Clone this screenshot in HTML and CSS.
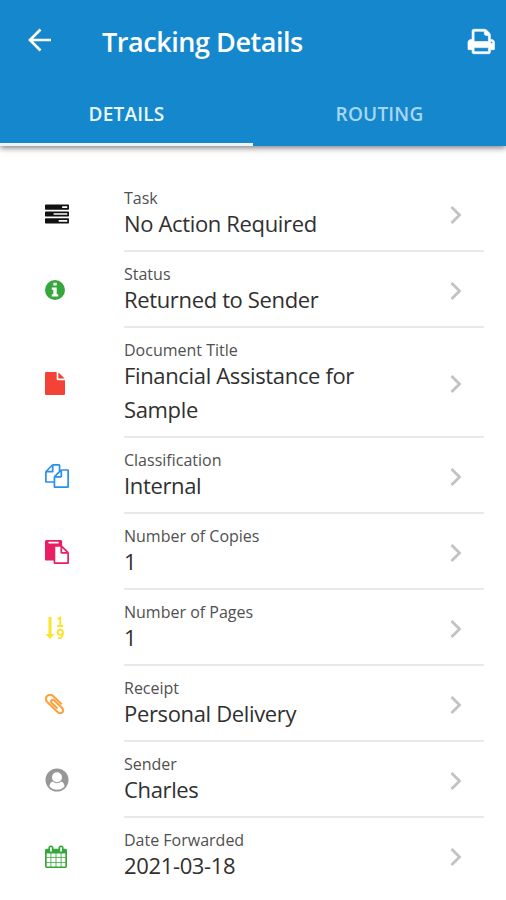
FILE: index.html
```html
<!DOCTYPE html>
<html lang="en">
<head>
<meta charset="utf-8">
<title>Tracking Details</title>
<link rel="stylesheet" href="styles.css">
</head>
<body>
<header class="header">
  <div class="toolbar">
    <svg class="back" viewBox="0 0 24 24"><path d="M23 12H2M12.500 1.500L2 12l10.500 10.500" fill="none" stroke="currentColor" stroke-width="2.700"/></svg>
    <h1 class="title">Tracking Details</h1>
    <svg class="print" viewBox="64 128 1664 1536"><path fill="currentColor" stroke="currentColor" stroke-width="40" d="M448 1536h896v-256h-896v256zm0-640h896v-384h-160q-40 0-68-28t-28-68v-160h-640v640zm1152 64q0-26-19-45t-45-19-45 19-19 45 19 45 45 19 45-19 19-45zm128 0v416q0 13-9.500 22.500t-22.500 9.500h-224v160q0 40-28 68t-68 28h-960q-40 0-68-28t-28-68v-160h-224q-13 0-22.500-9.500t-9.500-22.500v-416q0-79 56.500-135.500t135.500-56.500h64v-544q0-40 28-68t68-28h672q40 0 88 20t76 48l152 152q28 28 48 76t20 88v256h64q79 0 135.500 56.500t56.500 135.500z"/></svg>
  </div>
  <nav class="tabs">
    <div class="tab tab-active"><span class="tab-a">DETAILS</span></div>
    <div class="tab"><span class="tab-b">ROUTING</span></div>
  </nav>
</header>
<main class="list">
  <section class="row">
    <div class="icon black"><svg width="24" height="20" viewBox="0 128 1792 1408"><path d="M1024 1408h640v-128h-640v128zm-384-512h1024v-128h-1024v128zm640-512h384v-128h-384v128zm512 832v256q0 26-19 45t-45 19h-1664q-26 0-45-19t-19-45v-256q0-26 19-45t45-19h1664q26 0 45 19t19 45zm0-512v256q0 26-19 45t-45 19h-1664q-26 0-45-19t-19-45v-256q0-26 19-45t45-19h1664q26 0 45 19t19 45zm0-512v256q0 26-19 45t-45 19h-1664q-26 0-45-19t-19-45v-256q0-26 19-45t45-19h1664q26 0 45 19t19 45z"/></svg></div>
    <div class="body"><div class="text"><div class="label">Task</div><div class="value">No Action Required</div></div><svg class="chevron" viewBox="0 0 12 20"><path d="M1.500 2L9.500 10l-8 8"/></svg></div>
  </section>
  <section class="row">
    <div class="icon green"><svg width="20" height="20" viewBox="0 0 20 20"><circle cx="10" cy="10" r="10"/><path fill="#fff" d="M8.300 2.700h3.400v2.800H8.300zM6.800 7.500h4.900v6.700h1.500v2.300H6.800v-2.300h1.500V9.800H6.800z"/></svg></div>
    <div class="body"><div class="text"><div class="label">Status</div><div class="value">Returned to Sender</div></div><svg class="chevron" viewBox="0 0 12 20"><path d="M1.500 2L9.500 10l-8 8"/></svg></div>
  </section>
  <section class="row">
    <div class="icon red"><svg width="20" height="23" viewBox="128 0 1536 1792" preserveAspectRatio="none"><path d="M1152 512v-472q22 14 36 28l408 408q14 14 28 36h-472zm-128 32q0 40 28 68t68 28h544v1056q0 40-28 68t-68 28h-1344q-40 0-68-28t-28-68v-1600q0-40 28-68t68-28h800v544z"/></svg></div>
    <div class="body"><div class="text"><div class="label">Document Title</div><div class="value">Financial Assistance for Sample</div></div><svg class="chevron" viewBox="0 0 12 20"><path d="M1.500 2L9.500 10l-8 8"/></svg></div>
  </section>
  <section class="row">
    <div class="icon blue"><svg width="24" height="24" viewBox="0 0 1792 1792"><path d="M1696 384q40 0 68 28t28 68v1216q0 40-28 68t-68 28h-960q-40 0-68-28t-28-68v-288h-544q-40 0-68-28t-28-68v-672q0-40 20-88t48-76l408-408q28-28 76-48t88-20h416q40 0 68 28t28 68v328q68-40 128-40h416zm-544 213l-299 299h299v-299zm-640-384l-299 299h299v-299zm196 647l316-316v-416h-384v416q0 40-28 68t-68 28h-416v640h512v-256q0-40 20-88t48-76zm956 804v-1152h-384v416q0 40-28 68t-68 28h-416v640h896z"/></svg></div>
    <div class="body"><div class="text"><div class="label">Classification</div><div class="value">Internal</div></div><svg class="chevron" viewBox="0 0 12 20"><path d="M1.500 2L9.500 10l-8 8"/></svg></div>
  </section>
  <section class="row">
    <div class="icon pink"><svg width="24" height="24" viewBox="0 0 1792 1792"><path d="M768 1664h896v-640h-416q-40 0-68-28t-28-68v-416h-384v1152zm256-1440v-64q0-13-9.500-22.500t-22.500-9.500h-704q-13 0-22.500 9.500t-9.500 22.500v64q0 13 9.500 22.500t22.500 9.500h704q13 0 22.500-9.500t9.500-22.500zm256 672h299l-299-299v299zm512 128v672q0 40-28 68t-68 28h-960q-40 0-68-28t-28-68v-160h-544q-40 0-68-28t-28-68v-1344q0-40 28-68t68-28h1088q40 0 68 28t28 68v328q21 13 36 28l408 408q28 28 48 76t20 88z"/></svg></div>
    <div class="body"><div class="text"><div class="label">Number of Copies</div><div class="value">1</div></div><svg class="chevron" viewBox="0 0 12 20"><path d="M1.500 2L9.500 10l-8 8"/></svg></div>
  </section>
  <section class="row">
    <div class="icon yellow"><svg width="20" height="24" viewBox="0 0 20 24"><path d="M3.500 1h3v17h3L5 23 .5 18h3z"/><path class="line" d="M12.500 3.300l2.700-1.600v8M12.200 10h6"/><circle class="line" cx="15.300" cy="16.300" r="2.600"/><path class="line" d="M17.900 16.300c.3 4-1.500 6.400-4.900 5.700"/></svg></div>
    <div class="body"><div class="text"><div class="label">Number of Pages</div><div class="value">1</div></div><svg class="chevron" viewBox="0 0 12 20"><path d="M1.500 2L9.500 10l-8 8"/></svg></div>
  </section>
  <section class="row">
    <div class="icon orange"><svg width="19" height="20" viewBox="196 127 1400 1533" preserveAspectRatio="none"><path stroke="currentColor" stroke-width="30" d="M1596 1385q0 117-79 196t-196 79q-135 0-235-100l-777-776q-113-115-113-271 0-159 110-270t269-111q158 0 273 113l605 606q10 10 10 22 0 16-30.500 46.500t-46.500 30.500q-13 0-23-10l-606-607q-79-77-181-77-106 0-179 75t-73 181q0 105 76 181l776 777q63 63 145 63 64 0 106-42t42-106q0-82-63-145l-581-581q-26-24-60-24-29 0-48 19t-19 48q0 32 25 59l410 410q10 10 10 22 0 16-31 47t-47 31q-12 0-22-10l-410-410q-63-61-63-149 0-82 57-139t139-57q88 0 149 63l581 581q100 98 100 235z"/></svg></div>
    <div class="body"><div class="text"><div class="label">Receipt</div><div class="value">Personal Delivery</div></div><svg class="chevron" viewBox="0 0 12 20"><path d="M1.500 2L9.500 10l-8 8"/></svg></div>
  </section>
  <section class="row">
    <div class="icon gray"><svg width="24" height="24" viewBox="0 0 24 24"><path fill-rule="evenodd" d="M12 .5a11.500 11.500 0 1 1 0 23 11.500 11.500 0 0 1 0-23zM4.400 18.300a9.900 9.900 0 0 0 15.200 0c-.4-2.600-1.600-4.500-3.500-4.700a6 6 0 0 1-8.200 0c-1.900.2-3.100 2.100-3.500 4.700zM12 4.200a5 5 0 1 0 0 10 5 5 0 0 0 0-10z"/></svg></div>
    <div class="body"><div class="text"><div class="label">Sender</div><div class="value">Charles</div></div><svg class="chevron" viewBox="0 0 12 20"><path d="M1.500 2L9.500 10l-8 8"/></svg></div>
  </section>
  <section class="row">
    <div class="icon green"><svg width="22" height="24" viewBox="64 -128 1664 1920" preserveAspectRatio="none"><path d="M192 1664h288v-288h-288v288zm352 0h320v-288h-320v288zm-352-352h288v-320h-288v320zm352 0h320v-320h-320v320zm-352-384h288v-288h-288v288zm736 736h320v-288h-320v288zm-384-736h320v-288h-320v288zm768 736h288v-288h-288v288zm-384-352h320v-320h-320v320zm-352-864v-288q0-13-9.500-22.500t-22.500-9.500h-64q-13 0-22.500 9.500t-9.500 22.500v288q0 13 9.500 22.500t22.500 9.500h64q13 0 22.500-9.500t9.500-22.500zm736 864h288v-320h-288v320zm-384-384h320v-288h-320v288zm384 0h288v-288h-288v288zm32-480v-288q0-13-9.500-22.500t-22.500-9.500h-64q-13 0-22.500 9.500t-9.500 22.500v288q0 13 9.500 22.500t22.500 9.500h64q13 0 22.500-9.500t9.500-22.500zm384-64v1280q0 52-38 90t-90 38h-1408q-52 0-90-38t-38-90v-1280q0-52 38-90t90-38h128v-96q0-66 47-113t113-47h64q66 0 113 47t47 113v96h384v-96q0-66 47-113t113-47h64q66 0 113 47t47 113v96h128q52 0 90 38t38 90z"/></svg></div>
    <div class="body"><div class="text"><div class="label">Date Forwarded</div><div class="value">2021-03-18</div></div><svg class="chevron" viewBox="0 0 12 20"><path d="M1.500 2L9.500 10l-8 8"/></svg></div>
  </section>
</main>
</body>
</html>
```

FILE: styles.css
```css
* { box-sizing: border-box; }
body {
  margin: 0;
  height: 900px;
  overflow: hidden;
  background: #fff;
  font-family: "Open Sans", "Noto Sans", sans-serif;
}
svg { display: block; flex: none; }
.header {
  height: 146px;
  background: #1588cd;
  color: #fff;
  box-shadow: 0 2px 6px rgba(0, 0, 0, .5);
}
.toolbar {
  display: flex;
  align-items: center;
  height: 82px;
  padding: 0 11.500px 0 28px;
}
.back { width: 24px; height: 24px; margin-top: -2px; }
.title {
  flex: 1;
  margin: 1px 0 0 50px;
  font-size: 27px;
  font-weight: 600;
  letter-spacing: -.45px;
  line-height: 36px;
  white-space: nowrap;
}
.print { width: 26.500px; height: 25px; overflow: visible; }
.tabs { display: flex; height: 64px; }
.tab {
  flex: 1;
  display: flex;
  justify-content: center;
  padding-top: 19px;
  border-bottom: 3px solid transparent;
  color: #a9d6f2;
  font-size: 19px;
  font-weight: 600;
  letter-spacing: .2px;
  line-height: 26px;
}
.tab-active { color: #e9f6fe; border-bottom-color: #eef3f8; }
.list { padding: 29.500px 22px 0 45px; }
.row { display: flex; }
.icon { display: flex; align-items: center; width: 79px; padding-top: 1px; fill: currentColor; }
.body {
  flex: 1;
  display: flex;
  align-items: center;
  padding: 13px 22px 9px 0;
  border-bottom: 2px solid #e8e8e8;
}
.row:last-child .body { border-bottom-color: transparent; }
.text { width: 260px; margin: -1px auto 1px 0; }
.label { color: #505050; font-size: 16px; line-height: 20px; margin-bottom: -2px; letter-spacing: 0; }
.value { color: #303030; font-size: 22px; line-height: 34px; letter-spacing: -.35px; }
.chevron { width: 12px; height: 20px; fill: none; stroke: #c2c2c2; stroke-width: 2.800; }
.line { fill: none; stroke: currentColor; stroke-width: 1.900; }
.black { color: #111; }
.green { color: #35a83c; }
.red { color: #f44336; }
.blue { color: #2b8fee; }
.pink { color: #e91e63; }
.yellow { color: #fbe32e; }
.orange { color: #ff9d35; }
.gray { color: #979797; }
```
